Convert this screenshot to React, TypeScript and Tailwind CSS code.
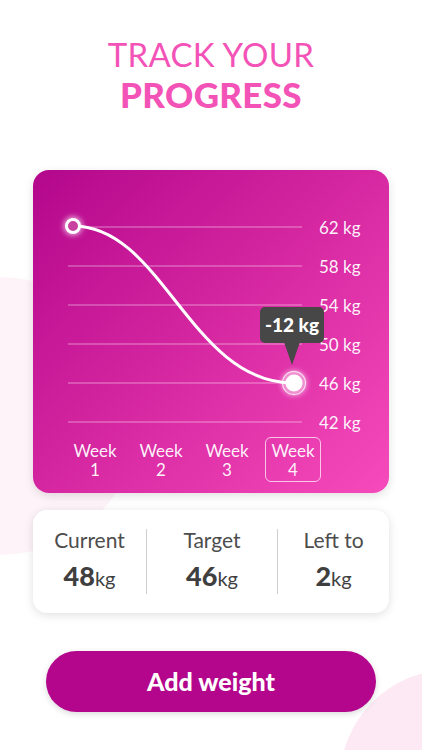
import React from "react";

const labels = ["62 kg", "58 kg", "54 kg", "50 kg", "46 kg", "42 kg"];
const gridY = [57, 96, 135, 174, 213, 252];

function Chart() {
  return (
    <div className="relative w-[356px] h-[323px] rounded-[16px] bg-[linear-gradient(135deg,#b3078c_0%,#d3249f_45%,#f64bbb_100%)] shadow-[0_3px_10px_rgba(0,0,0,0.12)] overflow-hidden">
      <div className="flex h-[260px]">
        <svg width="280" height="260" viewBox="0 0 280 260" className="shrink-0">
          <defs>
            <filter id="glow" x="-100%" y="-100%" width="300%" height="300%">
              <feGaussianBlur stdDeviation="2.5" />
            </filter>
          </defs>
          {gridY.map((y) => (
            <line key={y} x1="35" x2="269" y1={y} y2={y} stroke="rgba(255,255,255,0.32)" strokeWidth="1.3" />
          ))}
          <path d="M40 56 C 130 56, 157 213, 261 213" fill="none" stroke="#ffffff" strokeWidth="3" strokeLinecap="round" />
          <circle cx="40" cy="56" r="10" fill="rgba(255,255,255,0.55)" filter="url(#glow)" />
          <circle cx="40" cy="56" r="6.5" fill="#c9429f" stroke="#ffffff" strokeWidth="3" />
          <circle cx="261" cy="213" r="13" fill="rgba(255,255,255,0.5)" filter="url(#glow)" />
          <circle cx="261" cy="213" r="11.5" fill="none" stroke="rgba(255,255,255,0.7)" strokeWidth="1.3" />
          <circle cx="261" cy="213" r="8.5" fill="#ffffff" />
        </svg>
        <div className="flex flex-col pt-[38px] pl-[6px]">
          {labels.map((l) => (
            <div key={l} className="h-[39px] leading-[39px] text-[17px] text-white/95 whitespace-nowrap">
              {l}
            </div>
          ))}
        </div>
      </div>
      <div className="flex gap-[10px] pl-[34px] mt-[7px]">
        {[1, 2, 3, 4].map((n) => (
          <div
            key={n}
            className={`w-[56px] h-[45px] flex flex-col items-center justify-center text-[17px] leading-[19px] text-white/95 rounded-[6px] ${
              n === 4 ? "border border-white/70" : "border border-transparent"
            }`}
          >
            <span>Week</span>
            <span>{n}</span>
          </div>
        ))}
      </div>
      <div className="absolute left-[227px] top-[137px] w-[64px] h-[36px] rounded-[5px] bg-[#474747] flex items-center justify-center text-white font-black text-[19px]">
        -12 kg
      </div>
      <svg className="absolute left-[251px] top-[172px]" width="16" height="24" viewBox="0 0 16 24">
        <polygon points="0,0 16,0 8,23" fill="#474747" />
      </svg>
    </div>
  );
}

function Stat({ label, value }: { label: string; value: string }) {
  return (
    <div className="flex flex-col items-center">
      <div className="text-[21px] leading-[24px] text-[#4d4d4d]">{label}</div>
      <div className="mt-[9px] leading-[30px] text-[#3f3f3f]">
        <span className="text-[27px] font-black">{value}</span>
        <span className="text-[20px]">kg</span>
      </div>
    </div>
  );
}

export default function App() {
  return (
    <div
      className="relative w-[422px] h-[750px] overflow-hidden bg-white"
      style={{ fontFamily: "Lato, 'Noto Sans', sans-serif" }}
    >
      <div className="absolute left-[-139px] top-[277px] w-[278px] h-[278px] rounded-full bg-[#fdf3f9]" />
      <div className="absolute left-[340px] top-[670px] w-[220px] h-[220px] rounded-full bg-[#fde9f4]" />
      <div className="relative flex flex-col items-center">
        <h1 className="mt-[34px] text-center text-[#f353b7] leading-[40px] tracking-[0.3px]">
          <div className="font-normal text-[33px]">TRACK YOUR</div>
          <div className="font-black text-[35px]">PROGRESS</div>
        </h1>
        <div className="mt-[56px]">
          <Chart />
        </div>
        <div className="mt-[17px] w-[356px] h-[103px] rounded-[14px] bg-white shadow-[0_2px_10px_rgba(0,0,0,0.13)] flex items-center">
          <div className="w-[113px] flex justify-center">
            <Stat label="Current" value="48" />
          </div>
          <div className="w-px h-[65px] bg-[#cfcfcf]" />
          <div className="w-[130px] flex justify-center">
            <Stat label="Target" value="46" />
          </div>
          <div className="w-px h-[65px] bg-[#cfcfcf]" />
          <div className="flex-1 flex justify-center">
            <Stat label="Left to" value="2" />
          </div>
        </div>
        <button className="mt-[38px] w-[330px] h-[61px] rounded-full bg-[#b3068c] text-white font-black text-[25px] shadow-[0_2px_6px_rgba(0,0,0,0.15)]">
          Add weight
        </button>
      </div>
    </div>
  );
}
